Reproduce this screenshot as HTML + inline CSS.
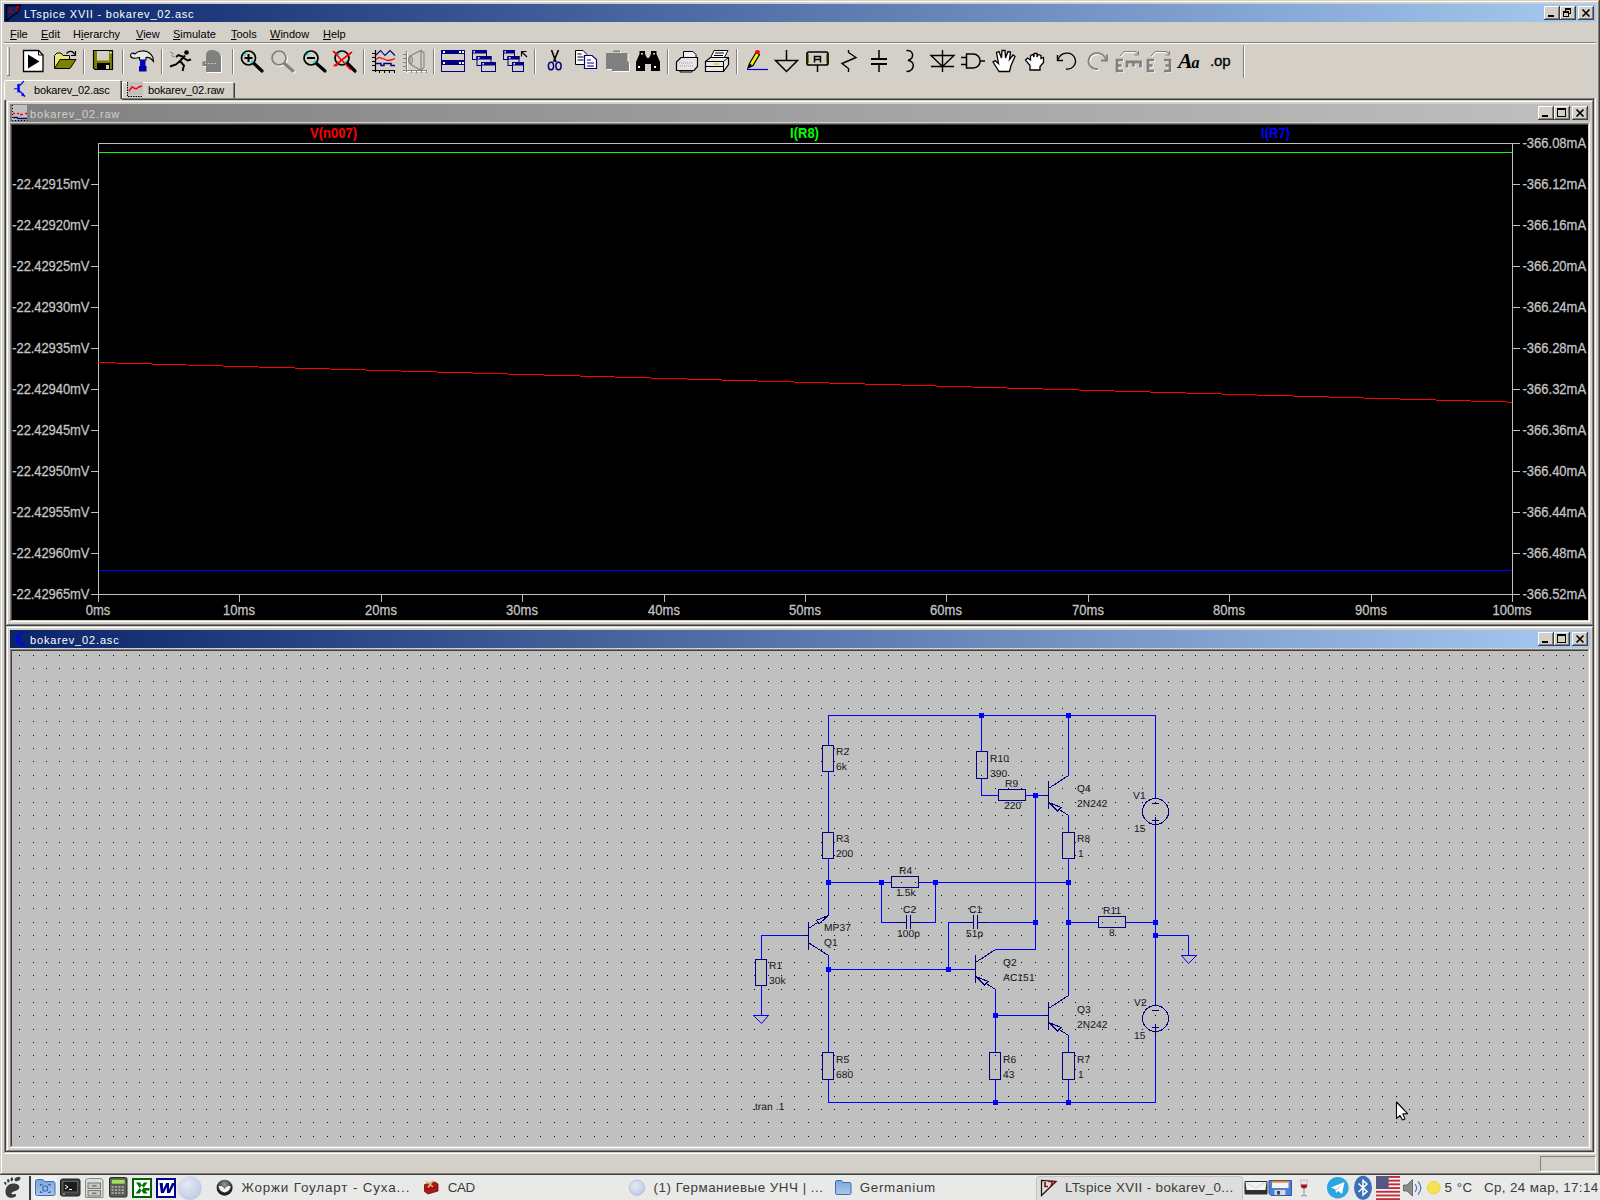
<!DOCTYPE html><html><head><meta charset="utf-8"><title>LTspice XVII</title><style>
html,body{margin:0;padding:0}
body{width:1600px;height:1200px;position:relative;overflow:hidden;background:#d4d0c8;font-family:"Liberation Sans",sans-serif;}
.a{position:absolute}
.t{position:absolute;white-space:nowrap;line-height:1}
.pt{transform:scaleY(1.07);transform-origin:0 84.65%;-webkit-text-stroke:0.25px #c4c4c4}
svg{position:absolute;left:0;top:0;overflow:visible}
</style></head><body><div class="a" style="left:0px;top:0px;width:1600px;height:1175px;background:#d4d0c8;"></div>
<div class="a" style="left:1px;top:1px;width:1597px;height:1px;background:#fff;"></div>
<div class="a" style="left:1px;top:1px;width:1px;height:1172px;background:#fff;"></div>
<div class="a" style="left:1598px;top:1px;width:1px;height:1173px;background:#808080;"></div>
<div class="a" style="left:1px;top:1173px;width:1598px;height:1px;background:#808080;"></div>
<div class="a" style="left:1599px;top:0px;width:1px;height:1175px;background:#404040;"></div>
<div class="a" style="left:0px;top:1174px;width:1600px;height:1px;background:#404040;"></div>
<div class="a" style="left:4px;top:4px;width:1592px;height:18px;background:linear-gradient(90deg,#0a246a,#a6caf0);"></div>
<svg class="a" style="left:5px;top:5px" width="17" height="17"><path d="M1.500 .5V15.500L8 10.500L12.500 7.500L15.500 .5Z" fill="none" stroke="#000" stroke-width="1.300"/><path d="M5.500 2.500v4M3 7h6" stroke="#a40000" stroke-width="1.700" fill="none"/><path d="M11 1.700h3.800M13.300 1.700l-1.500 5.300" stroke="#a40000" stroke-width="1.600" fill="none"/></svg>
<div class="t" style="left:24px;top:8.89px;font-size:11px;color:#fff;letter-spacing:0.78px">LTspice XVII - bokarev_02.asc</div>
<div class="a" style="left:1544px;top:6px;width:16px;height:14px;background:#d4d0c8;"></div>
<div class="a" style="left:1544px;top:6px;width:15px;height:1px;background:#fff;"></div>
<div class="a" style="left:1544px;top:6px;width:1px;height:13px;background:#fff;"></div>
<div class="a" style="left:1559px;top:6px;width:1px;height:14px;background:#404040;"></div>
<div class="a" style="left:1544px;top:19px;width:16px;height:1px;background:#404040;"></div>
<div class="a" style="left:1558px;top:7px;width:1px;height:12px;background:#808080;"></div>
<div class="a" style="left:1545px;top:18px;width:14px;height:1px;background:#808080;"></div>
<div class="a" style="left:1548px;top:15px;width:6px;height:2px;background:#000;"></div>
<div class="a" style="left:1560px;top:6px;width:16px;height:14px;background:#d4d0c8;"></div>
<div class="a" style="left:1560px;top:6px;width:15px;height:1px;background:#fff;"></div>
<div class="a" style="left:1560px;top:6px;width:1px;height:13px;background:#fff;"></div>
<div class="a" style="left:1575px;top:6px;width:1px;height:14px;background:#404040;"></div>
<div class="a" style="left:1560px;top:19px;width:16px;height:1px;background:#404040;"></div>
<div class="a" style="left:1574px;top:7px;width:1px;height:12px;background:#808080;"></div>
<div class="a" style="left:1561px;top:18px;width:14px;height:1px;background:#808080;"></div>
<div class="a" style="left:1565px;top:8px;width:6px;height:6px;background:#000;"></div>
<div class="a" style="left:1566px;top:10px;width:4px;height:3px;background:#d4d0c8;"></div>
<div class="a" style="left:1563px;top:11px;width:6px;height:6px;background:#000;"></div>
<div class="a" style="left:1564px;top:13px;width:4px;height:3px;background:#d4d0c8;"></div>
<div class="a" style="left:1578px;top:6px;width:16px;height:14px;background:#d4d0c8;"></div>
<div class="a" style="left:1578px;top:6px;width:15px;height:1px;background:#fff;"></div>
<div class="a" style="left:1578px;top:6px;width:1px;height:13px;background:#fff;"></div>
<div class="a" style="left:1593px;top:6px;width:1px;height:14px;background:#404040;"></div>
<div class="a" style="left:1578px;top:19px;width:16px;height:1px;background:#404040;"></div>
<div class="a" style="left:1592px;top:7px;width:1px;height:12px;background:#808080;"></div>
<div class="a" style="left:1579px;top:18px;width:14px;height:1px;background:#808080;"></div>
<svg class="a" style="left:1578px;top:6px" width="16" height="14"><path d="M4.5 3.5 L11.5 10.5 M11.5 3.5 L4.5 10.5" stroke="#000" stroke-width="1.7" fill="none"/></svg>
<div class="t" style="left:10px;top:28.69px;font-size:11px;color:#000;"><span style="text-decoration:underline">F</span>ile</div>
<div class="t" style="left:41px;top:28.69px;font-size:11px;color:#000;"><span style="text-decoration:underline">E</span>dit</div>
<div class="t" style="left:73px;top:28.69px;font-size:11px;color:#000;">H<span style="text-decoration:underline">i</span>erarchy</div>
<div class="t" style="left:136px;top:28.69px;font-size:11px;color:#000;"><span style="text-decoration:underline">V</span>iew</div>
<div class="t" style="left:173px;top:28.69px;font-size:11px;color:#000;"><span style="text-decoration:underline">S</span>imulate</div>
<div class="t" style="left:231px;top:28.69px;font-size:11px;color:#000;"><span style="text-decoration:underline">T</span>ools</div>
<div class="t" style="left:270px;top:28.69px;font-size:11px;color:#000;"><span style="text-decoration:underline">W</span>indow</div>
<div class="t" style="left:323px;top:28.69px;font-size:11px;color:#000;"><span style="text-decoration:underline">H</span>elp</div>
<div class="a" style="left:4px;top:42px;width:1592px;height:1px;background:#808080;"></div>
<div class="a" style="left:4px;top:43px;width:1592px;height:1px;background:#fff;"></div>
<div class="a" style="left:7px;top:47px;width:1px;height:28px;background:#fff;"></div>
<div class="a" style="left:8px;top:47px;width:1px;height:28px;background:#d4d0c8;"></div>
<div class="a" style="left:9px;top:47px;width:1px;height:28px;background:#808080;"></div>
<div class="a" style="left:7px;top:75px;width:3px;height:1px;background:#808080;"></div>
<div class="a" style="left:1243px;top:45px;width:1px;height:33px;background:#808080;"></div>
<div class="a" style="left:1244px;top:45px;width:1px;height:33px;background:#fff;"></div>
<div class="a" style="left:122px;top:82px;width:112px;height:16px;background:#d4d0c8;"></div>
<div class="a" style="left:122px;top:82px;width:111px;height:1px;background:#fff;"></div>
<div class="a" style="left:122px;top:82px;width:1px;height:16px;background:#fff;"></div>
<div class="a" style="left:234px;top:83px;width:1px;height:15px;background:#404040;"></div>
<div class="a" style="left:233px;top:83px;width:1px;height:15px;background:#808080;"></div>
<div class="a" style="left:4px;top:80px;width:118px;height:21px;background:#d4d0c8;"></div>
<div class="a" style="left:5px;top:80px;width:115px;height:1px;background:#fff;"></div>
<div class="a" style="left:4px;top:81px;width:1px;height:19px;background:#fff;"></div>
<div class="a" style="left:121px;top:81px;width:1px;height:18px;background:#404040;"></div>
<div class="a" style="left:120px;top:81px;width:1px;height:18px;background:#808080;"></div>
<div class="t" style="left:34px;top:84.69px;font-size:11px;color:#000;letter-spacing:-0.15px">bokarev_02.asc</div>
<div class="t" style="left:148px;top:85.39px;font-size:11px;color:#000;letter-spacing:-0.15px">bokarev_02.raw</div>
<svg class="a" style="left:12px;top:82px" width="16" height="16"><rect x="5.300" y="2" width="2.500" height="8.500" fill="#0000ff"/><path d="M2 6.800h3.500 M7.800 3.500l4.200-4.500 M7.800 9l5.200 5.500" stroke="#0000ff" stroke-width="1.100" fill="none"/><path d="M13 14.800l-4.200-1.600 2.400-2.400z" fill="#0000ff"/></svg>
<svg class="a" style="left:126px;top:82px" width="17" height="16"><rect x="2" y="0" width="15" height="13" fill="#c0c0c0"/><path d="M1.5 0v14.5h15" stroke="#000" stroke-width="1" fill="none" stroke-dasharray="1.5 1"/><path d="M3 9l3-4 4 2 3-2 3-1" stroke="#ff0000" stroke-width="1.5" fill="none"/></svg>
<div class="a" style="left:122px;top:98px;width:1474px;height:1px;background:#808080;"></div>
<div class="a" style="left:122px;top:99px;width:1473px;height:1px;background:#404040;"></div>
<div class="a" style="left:4px;top:100px;width:1px;height:1053px;background:#808080;"></div>
<div class="a" style="left:5px;top:100px;width:1px;height:1052px;background:#404040;"></div>
<div class="a" style="left:1594px;top:99px;width:1px;height:1054px;background:#d4d0c8;"></div>
<div class="a" style="left:1595px;top:98px;width:1px;height:1056px;background:#fff;"></div>
<div class="a" style="left:5px;top:1152px;width:1590px;height:1px;background:#d4d0c8;"></div>
<div class="a" style="left:4px;top:1153px;width:1592px;height:1px;background:#fff;"></div>
<div class="a" style="left:6px;top:100px;width:1588px;height:526px;background:#d4d0c8;"></div>
<div class="a" style="left:7px;top:101px;width:1585px;height:1px;background:#fff;"></div>
<div class="a" style="left:7px;top:101px;width:1px;height:523px;background:#fff;"></div>
<div class="a" style="left:1593px;top:100px;width:1px;height:526px;background:#404040;"></div>
<div class="a" style="left:6px;top:625px;width:1588px;height:1px;background:#404040;"></div>
<div class="a" style="left:1592px;top:101px;width:1px;height:524px;background:#808080;"></div>
<div class="a" style="left:7px;top:624px;width:1586px;height:1px;background:#808080;"></div>
<div class="a" style="left:10px;top:104px;width:1580px;height:18px;background:linear-gradient(90deg,#808080,#c0c0c0);"></div>
<div class="t" style="left:30px;top:108.89px;font-size:11px;color:#d4d0c8;letter-spacing:0.85px">bokarev_02.raw</div>
<svg class="a" style="left:11px;top:105px" width="16" height="16"><rect x="1" y="0" width="15" height="15" fill="#c0c0c0"/><path d="M1.5 0v15.5h15" stroke="#000" stroke-width="1" fill="none" stroke-dasharray="1 2"/><path d="M2 8.5h2m2 0h2m1 1h3m2 -1h2" stroke="#ff0000" stroke-width="1.3" fill="none"/><path d="M2 12.5h4l1 1h3l1 -0h5" stroke="#000080" stroke-width="1.3" fill="none"/></svg>
<div class="a" style="left:1538px;top:106px;width:16px;height:14px;background:#d4d0c8;"></div>
<div class="a" style="left:1538px;top:106px;width:15px;height:1px;background:#fff;"></div>
<div class="a" style="left:1538px;top:106px;width:1px;height:13px;background:#fff;"></div>
<div class="a" style="left:1553px;top:106px;width:1px;height:14px;background:#404040;"></div>
<div class="a" style="left:1538px;top:119px;width:16px;height:1px;background:#404040;"></div>
<div class="a" style="left:1552px;top:107px;width:1px;height:12px;background:#808080;"></div>
<div class="a" style="left:1539px;top:118px;width:14px;height:1px;background:#808080;"></div>
<div class="a" style="left:1542px;top:115px;width:6px;height:2px;background:#000;"></div>
<div class="a" style="left:1554px;top:106px;width:16px;height:14px;background:#d4d0c8;"></div>
<div class="a" style="left:1554px;top:106px;width:15px;height:1px;background:#fff;"></div>
<div class="a" style="left:1554px;top:106px;width:1px;height:13px;background:#fff;"></div>
<div class="a" style="left:1569px;top:106px;width:1px;height:14px;background:#404040;"></div>
<div class="a" style="left:1554px;top:119px;width:16px;height:1px;background:#404040;"></div>
<div class="a" style="left:1568px;top:107px;width:1px;height:12px;background:#808080;"></div>
<div class="a" style="left:1555px;top:118px;width:14px;height:1px;background:#808080;"></div>
<div class="a" style="left:1557px;top:108px;width:9px;height:9px;background:#000;"></div>
<div class="a" style="left:1558px;top:110px;width:7px;height:6px;background:#d4d0c8;"></div>
<div class="a" style="left:1572px;top:106px;width:16px;height:14px;background:#d4d0c8;"></div>
<div class="a" style="left:1572px;top:106px;width:15px;height:1px;background:#fff;"></div>
<div class="a" style="left:1572px;top:106px;width:1px;height:13px;background:#fff;"></div>
<div class="a" style="left:1587px;top:106px;width:1px;height:14px;background:#404040;"></div>
<div class="a" style="left:1572px;top:119px;width:16px;height:1px;background:#404040;"></div>
<div class="a" style="left:1586px;top:107px;width:1px;height:12px;background:#808080;"></div>
<div class="a" style="left:1573px;top:118px;width:14px;height:1px;background:#808080;"></div>
<svg class="a" style="left:1572px;top:106px" width="16" height="14"><path d="M4.5 3.5 L11.5 10.5 M11.5 3.5 L4.5 10.5" stroke="#000" stroke-width="1.7" fill="none"/></svg>
<div class="a" style="left:10px;top:123px;width:1579px;height:1px;background:#808080;"></div>
<div class="a" style="left:10px;top:123px;width:1px;height:498px;background:#808080;"></div>
<div class="a" style="left:11px;top:124px;width:1577px;height:1px;background:#404040;"></div>
<div class="a" style="left:11px;top:124px;width:1px;height:496px;background:#404040;"></div>
<div class="a" style="left:1589px;top:123px;width:1px;height:499px;background:#fff;"></div>
<div class="a" style="left:10px;top:621px;width:1580px;height:1px;background:#fff;"></div>
<div class="a" style="left:1588px;top:124px;width:1px;height:497px;background:#d4d0c8;"></div>
<div class="a" style="left:11px;top:620px;width:1578px;height:1px;background:#d4d0c8;"></div>
<div class="a" style="left:6px;top:626px;width:1588px;height:526px;background:#d4d0c8;"></div>
<div class="a" style="left:7px;top:627px;width:1585px;height:1px;background:#fff;"></div>
<div class="a" style="left:7px;top:627px;width:1px;height:523px;background:#fff;"></div>
<div class="a" style="left:1593px;top:626px;width:1px;height:526px;background:#404040;"></div>
<div class="a" style="left:6px;top:1151px;width:1588px;height:1px;background:#404040;"></div>
<div class="a" style="left:1592px;top:627px;width:1px;height:524px;background:#808080;"></div>
<div class="a" style="left:7px;top:1150px;width:1586px;height:1px;background:#808080;"></div>
<div class="a" style="left:10px;top:630px;width:1580px;height:18px;background:linear-gradient(90deg,#0a246a,#a6caf0);"></div>
<div class="t" style="left:30px;top:634.89px;font-size:11px;color:#fff;letter-spacing:0.85px">bokarev_02.asc</div>
<svg class="a" style="left:11px;top:631px" width="16" height="17"><rect x="6" y="3.5" width="2.2" height="9" fill="#0000ff"/><path d="M3 7.5h3.500 M8 4.500l5-4.500 M8 11l6 4.500" stroke="#0000ff" stroke-width="1.1" fill="none"/><path d="M14 15.800l-4.500-1.800 2.500-2.500z" fill="#0000ff"/></svg>
<div class="a" style="left:1538px;top:632px;width:16px;height:14px;background:#d4d0c8;"></div>
<div class="a" style="left:1538px;top:632px;width:15px;height:1px;background:#fff;"></div>
<div class="a" style="left:1538px;top:632px;width:1px;height:13px;background:#fff;"></div>
<div class="a" style="left:1553px;top:632px;width:1px;height:14px;background:#404040;"></div>
<div class="a" style="left:1538px;top:645px;width:16px;height:1px;background:#404040;"></div>
<div class="a" style="left:1552px;top:633px;width:1px;height:12px;background:#808080;"></div>
<div class="a" style="left:1539px;top:644px;width:14px;height:1px;background:#808080;"></div>
<div class="a" style="left:1542px;top:641px;width:6px;height:2px;background:#000;"></div>
<div class="a" style="left:1554px;top:632px;width:16px;height:14px;background:#d4d0c8;"></div>
<div class="a" style="left:1554px;top:632px;width:15px;height:1px;background:#fff;"></div>
<div class="a" style="left:1554px;top:632px;width:1px;height:13px;background:#fff;"></div>
<div class="a" style="left:1569px;top:632px;width:1px;height:14px;background:#404040;"></div>
<div class="a" style="left:1554px;top:645px;width:16px;height:1px;background:#404040;"></div>
<div class="a" style="left:1568px;top:633px;width:1px;height:12px;background:#808080;"></div>
<div class="a" style="left:1555px;top:644px;width:14px;height:1px;background:#808080;"></div>
<div class="a" style="left:1557px;top:634px;width:9px;height:9px;background:#000;"></div>
<div class="a" style="left:1558px;top:636px;width:7px;height:6px;background:#d4d0c8;"></div>
<div class="a" style="left:1572px;top:632px;width:16px;height:14px;background:#d4d0c8;"></div>
<div class="a" style="left:1572px;top:632px;width:15px;height:1px;background:#fff;"></div>
<div class="a" style="left:1572px;top:632px;width:1px;height:13px;background:#fff;"></div>
<div class="a" style="left:1587px;top:632px;width:1px;height:14px;background:#404040;"></div>
<div class="a" style="left:1572px;top:645px;width:16px;height:1px;background:#404040;"></div>
<div class="a" style="left:1586px;top:633px;width:1px;height:12px;background:#808080;"></div>
<div class="a" style="left:1573px;top:644px;width:14px;height:1px;background:#808080;"></div>
<svg class="a" style="left:1572px;top:632px" width="16" height="14"><path d="M4.5 3.5 L11.5 10.5 M11.5 3.5 L4.5 10.5" stroke="#000" stroke-width="1.7" fill="none"/></svg>
<div class="a" style="left:10px;top:649px;width:1579px;height:1px;background:#808080;"></div>
<div class="a" style="left:10px;top:649px;width:1px;height:498px;background:#808080;"></div>
<div class="a" style="left:11px;top:650px;width:1577px;height:1px;background:#404040;"></div>
<div class="a" style="left:11px;top:650px;width:1px;height:496px;background:#404040;"></div>
<div class="a" style="left:1589px;top:649px;width:1px;height:499px;background:#fff;"></div>
<div class="a" style="left:10px;top:1147px;width:1580px;height:1px;background:#fff;"></div>
<div class="a" style="left:1588px;top:650px;width:1px;height:497px;background:#d4d0c8;"></div>
<div class="a" style="left:11px;top:1146px;width:1578px;height:1px;background:#d4d0c8;"></div>
<div class="a" style="left:12px;top:125px;width:1576px;height:495px;background:#000;"></div>
<svg width="1600" height="1200" shape-rendering="crispEdges"><path d="M98.5 143.5H1512.5V594.5H98.5Z" stroke="#c0c0c0" fill="none" stroke-width="1"/><path d="M1513 143.5H1520M91 184.5H98M1513 184.5H1520M91 225.5H98M1513 225.5H1520M91 266.5H98M1513 266.5H1520M91 307.5H98M1513 307.5H1520M91 348.5H98M1513 348.5H1520M91 389.5H98M1513 389.5H1520M91 430.5H98M1513 430.5H1520M91 471.5H98M1513 471.5H1520M91 512.5H98M1513 512.5H1520M91 553.5H98M1513 553.5H1520M91 594.5H98M1513 594.5H1520M98.5 595V602M239.5 595V602M381.5 595V602M522.5 595V602M664.5 595V602M805.5 595V602M946.5 595V602M1088.5 595V602M1229.5 595V602M1371.5 595V602M1512.5 595V602" stroke="#c0c0c0" fill="none" stroke-width="1"/><path d="M99 152.5H1512" stroke="#00ff00" stroke-width="1"/><path d="M99 570.5H1512" stroke="#0000ff" stroke-width="1"/><path d="M98 362.5L1512 402.15" stroke="#ff0000" stroke-width="1" fill="none"/></svg>
<div class="t pt" style="right:1510.7px;top:178.00px;font-size:13px;color:#c4c4c4;letter-spacing:-0.1px">-22.42915mV</div>
<div class="t pt" style="right:1510.7px;top:219.00px;font-size:13px;color:#c4c4c4;letter-spacing:-0.1px">-22.42920mV</div>
<div class="t pt" style="right:1510.7px;top:260.00px;font-size:13px;color:#c4c4c4;letter-spacing:-0.1px">-22.42925mV</div>
<div class="t pt" style="right:1510.7px;top:301.00px;font-size:13px;color:#c4c4c4;letter-spacing:-0.1px">-22.42930mV</div>
<div class="t pt" style="right:1510.7px;top:342.00px;font-size:13px;color:#c4c4c4;letter-spacing:-0.1px">-22.42935mV</div>
<div class="t pt" style="right:1510.7px;top:383.00px;font-size:13px;color:#c4c4c4;letter-spacing:-0.1px">-22.42940mV</div>
<div class="t pt" style="right:1510.7px;top:424.00px;font-size:13px;color:#c4c4c4;letter-spacing:-0.1px">-22.42945mV</div>
<div class="t pt" style="right:1510.7px;top:465.00px;font-size:13px;color:#c4c4c4;letter-spacing:-0.1px">-22.42950mV</div>
<div class="t pt" style="right:1510.7px;top:506.00px;font-size:13px;color:#c4c4c4;letter-spacing:-0.1px">-22.42955mV</div>
<div class="t pt" style="right:1510.7px;top:547.00px;font-size:13px;color:#c4c4c4;letter-spacing:-0.1px">-22.42960mV</div>
<div class="t pt" style="right:1510.7px;top:588.00px;font-size:13px;color:#c4c4c4;letter-spacing:-0.1px">-22.42965mV</div>
<div class="t" style="left:1522.5px;top:137.00px;font-size:13px;color:#c4c4c4;transform:scaleY(1.07);transform-origin:0 84.65%;-webkit-text-stroke:0.25px #c4c4c4">-366.08mA</div>
<div class="t" style="left:1522.5px;top:178.00px;font-size:13px;color:#c4c4c4;transform:scaleY(1.07);transform-origin:0 84.65%;-webkit-text-stroke:0.25px #c4c4c4">-366.12mA</div>
<div class="t" style="left:1522.5px;top:219.00px;font-size:13px;color:#c4c4c4;transform:scaleY(1.07);transform-origin:0 84.65%;-webkit-text-stroke:0.25px #c4c4c4">-366.16mA</div>
<div class="t" style="left:1522.5px;top:260.00px;font-size:13px;color:#c4c4c4;transform:scaleY(1.07);transform-origin:0 84.65%;-webkit-text-stroke:0.25px #c4c4c4">-366.20mA</div>
<div class="t" style="left:1522.5px;top:301.00px;font-size:13px;color:#c4c4c4;transform:scaleY(1.07);transform-origin:0 84.65%;-webkit-text-stroke:0.25px #c4c4c4">-366.24mA</div>
<div class="t" style="left:1522.5px;top:342.00px;font-size:13px;color:#c4c4c4;transform:scaleY(1.07);transform-origin:0 84.65%;-webkit-text-stroke:0.25px #c4c4c4">-366.28mA</div>
<div class="t" style="left:1522.5px;top:383.00px;font-size:13px;color:#c4c4c4;transform:scaleY(1.07);transform-origin:0 84.65%;-webkit-text-stroke:0.25px #c4c4c4">-366.32mA</div>
<div class="t" style="left:1522.5px;top:424.00px;font-size:13px;color:#c4c4c4;transform:scaleY(1.07);transform-origin:0 84.65%;-webkit-text-stroke:0.25px #c4c4c4">-366.36mA</div>
<div class="t" style="left:1522.5px;top:465.00px;font-size:13px;color:#c4c4c4;transform:scaleY(1.07);transform-origin:0 84.65%;-webkit-text-stroke:0.25px #c4c4c4">-366.40mA</div>
<div class="t" style="left:1522.5px;top:506.00px;font-size:13px;color:#c4c4c4;transform:scaleY(1.07);transform-origin:0 84.65%;-webkit-text-stroke:0.25px #c4c4c4">-366.44mA</div>
<div class="t" style="left:1522.5px;top:547.00px;font-size:13px;color:#c4c4c4;transform:scaleY(1.07);transform-origin:0 84.65%;-webkit-text-stroke:0.25px #c4c4c4">-366.48mA</div>
<div class="t" style="left:1522.5px;top:588.00px;font-size:13px;color:#c4c4c4;transform:scaleY(1.07);transform-origin:0 84.65%;-webkit-text-stroke:0.25px #c4c4c4">-366.52mA</div>
<div class="t pt" style="left:58px;width:80px;text-align:center;top:604.00px;font-size:13px;color:#c4c4c4">0ms</div>
<div class="t pt" style="left:199px;width:80px;text-align:center;top:604.00px;font-size:13px;color:#c4c4c4">10ms</div>
<div class="t pt" style="left:341px;width:80px;text-align:center;top:604.00px;font-size:13px;color:#c4c4c4">20ms</div>
<div class="t pt" style="left:482px;width:80px;text-align:center;top:604.00px;font-size:13px;color:#c4c4c4">30ms</div>
<div class="t pt" style="left:624px;width:80px;text-align:center;top:604.00px;font-size:13px;color:#c4c4c4">40ms</div>
<div class="t pt" style="left:765px;width:80px;text-align:center;top:604.00px;font-size:13px;color:#c4c4c4">50ms</div>
<div class="t pt" style="left:906px;width:80px;text-align:center;top:604.00px;font-size:13px;color:#c4c4c4">60ms</div>
<div class="t pt" style="left:1048px;width:80px;text-align:center;top:604.00px;font-size:13px;color:#c4c4c4">70ms</div>
<div class="t pt" style="left:1189px;width:80px;text-align:center;top:604.00px;font-size:13px;color:#c4c4c4">80ms</div>
<div class="t pt" style="left:1331px;width:80px;text-align:center;top:604.00px;font-size:13px;color:#c4c4c4">90ms</div>
<div class="t pt" style="left:1472px;width:80px;text-align:center;top:604.00px;font-size:13px;color:#c4c4c4">100ms</div>
<div class="t" style="left:283.5px;width:100px;text-align:center;top:126.60px;font-size:13px;font-weight:bold;transform:scaleY(1.08);transform-origin:0 84.65%;color:#ff0000">V(n007)</div>
<div class="t" style="left:754.5px;width:100px;text-align:center;top:126.60px;font-size:13px;font-weight:bold;transform:scaleY(1.08);transform-origin:0 84.65%;color:#00ff00">I(R8)</div>
<div class="t" style="left:1225.5px;width:100px;text-align:center;top:126.60px;font-size:13px;font-weight:bold;transform:scaleY(1.08);transform-origin:0 84.65%;color:#0000ff">I(R7)</div>
<div class="a" style="left:12px;top:651px;width:1576px;height:495px;background:#c0c0c0;"></div>
<svg width="1600" height="1200" shape-rendering="crispEdges"><defs><clipPath id="cv"><rect x="12" y="651" width="1576" height="495"/></clipPath><path id="dr" d="M19 .5h1M33 .5h1M46 .5h1M59 .5h1M73 .5h1M86 .5h1M99 .5h1M113 .5h1M126 .5h1M139 .5h1M153 .5h1M166 .5h1M180 .5h1M193 .5h1M206 .5h1M220 .5h1M233 .5h1M246 .5h1M260 .5h1M273 .5h1M286 .5h1M300 .5h1M313 .5h1M327 .5h1M340 .5h1M353 .5h1M367 .5h1M380 .5h1M393 .5h1M407 .5h1M420 .5h1M433 .5h1M447 .5h1M460 .5h1M474 .5h1M487 .5h1M500 .5h1M514 .5h1M527 .5h1M540 .5h1M554 .5h1M567 .5h1M580 .5h1M594 .5h1M607 .5h1M621 .5h1M634 .5h1M647 .5h1M661 .5h1M674 .5h1M687 .5h1M701 .5h1M714 .5h1M727 .5h1M741 .5h1M754 .5h1M768 .5h1M781 .5h1M794 .5h1M808 .5h1M821 .5h1M834 .5h1M848 .5h1M861 .5h1M874 .5h1M888 .5h1M901 .5h1M915 .5h1M928 .5h1M941 .5h1M955 .5h1M968 .5h1M981 .5h1M995 .5h1M1008 .5h1M1021 .5h1M1035 .5h1M1048 .5h1M1062 .5h1M1075 .5h1M1088 .5h1M1102 .5h1M1115 .5h1M1128 .5h1M1142 .5h1M1155 .5h1M1168 .5h1M1182 .5h1M1195 .5h1M1209 .5h1M1222 .5h1M1235 .5h1M1249 .5h1M1262 .5h1M1275 .5h1M1289 .5h1M1302 .5h1M1315 .5h1M1329 .5h1M1342 .5h1M1356 .5h1M1369 .5h1M1382 .5h1M1396 .5h1M1409 .5h1M1422 .5h1M1436 .5h1M1449 .5h1M1462 .5h1M1476 .5h1M1489 .5h1M1503 .5h1M1516 .5h1M1529 .5h1M1543 .5h1M1556 .5h1M1569 .5h1M1583 .5h1" stroke="#000" stroke-width="1"/></defs><g clip-path="url(#cv)"><use href="#dr" y="655"/><use href="#dr" y="668"/><use href="#dr" y="681"/><use href="#dr" y="695"/><use href="#dr" y="708"/><use href="#dr" y="721"/><use href="#dr" y="735"/><use href="#dr" y="748"/><use href="#dr" y="761"/><use href="#dr" y="775"/><use href="#dr" y="788"/><use href="#dr" y="802"/><use href="#dr" y="815"/><use href="#dr" y="828"/><use href="#dr" y="842"/><use href="#dr" y="855"/><use href="#dr" y="868"/><use href="#dr" y="882"/><use href="#dr" y="895"/><use href="#dr" y="908"/><use href="#dr" y="922"/><use href="#dr" y="935"/><use href="#dr" y="949"/><use href="#dr" y="962"/><use href="#dr" y="975"/><use href="#dr" y="989"/><use href="#dr" y="1002"/><use href="#dr" y="1015"/><use href="#dr" y="1029"/><use href="#dr" y="1042"/><use href="#dr" y="1055"/><use href="#dr" y="1069"/><use href="#dr" y="1082"/><use href="#dr" y="1096"/><use href="#dr" y="1109"/><use href="#dr" y="1122"/><use href="#dr" y="1136"/></g><path d="M828 715.5H1156M828.5 715V746M828.5 771V833M828.5 858V916M828.5 955V1053M828.5 1079V1103M828 1102.5H1156M1155.5 715V797M1155.5 828V1004M1155.5 1035V1103M981.5 715V752M981.5 778V796M981 795.5H999M1026 795.5H1044M1035.5 795V950M995 949.5H1036M1068.5 715V776M1068.5 815V833M1068.5 858V996M828 882.5H892M919 882.5H1069M881.5 882V923M881 922.5H896M922 922.5H936M935.5 882V923M988 922.5H1036M948 922.5H963M948.5 922V970M828 969.5H971M995.5 989V1053M995.5 1079V1103M995 1015.5H1044M1068.5 1035V1053M1068.5 1079V1103M1068 922.5H1099M1126 922.5H1156M1155 935.5H1189M1188.5 935V956M761 935.5H804M761.5 935V960M761.5 985V1016" stroke="#0000ff" stroke-width="1" fill="none"/><path d="M1181 955.5H1197 M1181.5 955.5L1188.5 963.5L1196.5 955.5 M753 1015.5H769 M753.5 1015.5L761.5 1023.5L768.5 1015.5" stroke="#0000ff" stroke-width="1" fill="none" shape-rendering="auto"/><rect x="979" y="713" width="5" height="5" fill="#0000ff"/><rect x="1066" y="713" width="5" height="5" fill="#0000ff"/><rect x="1033" y="793" width="5" height="5" fill="#0000ff"/><rect x="826" y="880" width="5" height="5" fill="#0000ff"/><rect x="879" y="880" width="5" height="5" fill="#0000ff"/><rect x="933" y="880" width="5" height="5" fill="#0000ff"/><rect x="1066" y="880" width="5" height="5" fill="#0000ff"/><rect x="1033" y="920" width="5" height="5" fill="#0000ff"/><rect x="1066" y="920" width="5" height="5" fill="#0000ff"/><rect x="1153" y="920" width="5" height="5" fill="#0000ff"/><rect x="1153" y="933" width="5" height="5" fill="#0000ff"/><rect x="826" y="967" width="5" height="5" fill="#0000ff"/><rect x="946" y="967" width="5" height="5" fill="#0000ff"/><rect x="993" y="1013" width="5" height="5" fill="#0000ff"/><rect x="993" y="1100" width="5" height="5" fill="#0000ff"/><rect x="1066" y="1100" width="5" height="5" fill="#0000ff"/><rect x="822.5" y="745.5" width="11" height="26" fill="none" stroke="#000080" stroke-width="1"/><rect x="822.5" y="832.5" width="11" height="26" fill="none" stroke="#000080" stroke-width="1"/><rect x="976.5" y="751.5" width="11" height="27" fill="none" stroke="#000080" stroke-width="1"/><rect x="998.5" y="789.5" width="27" height="11" fill="none" stroke="#000080" stroke-width="1"/><rect x="1062.5" y="832.5" width="12" height="26" fill="none" stroke="#000080" stroke-width="1"/><rect x="891.5" y="876.5" width="27" height="11" fill="none" stroke="#000080" stroke-width="1"/><rect x="755.5" y="959.5" width="11" height="26" fill="none" stroke="#000080" stroke-width="1"/><rect x="1098.5" y="916.5" width="27" height="11" fill="none" stroke="#000080" stroke-width="1"/><rect x="822.5" y="1052.5" width="11" height="27" fill="none" stroke="#000080" stroke-width="1"/><rect x="989.5" y="1052.5" width="11" height="27" fill="none" stroke="#000080" stroke-width="1"/><rect x="1062.5" y="1052.5" width="12" height="27" fill="none" stroke="#000080" stroke-width="1"/><path d="M895 922.5H906M906.5 915V929M910.5 915V929M911 922.5H922M962 922.5H973M973.5 915V929M977.5 915V929M978 922.5H988M1043 795.5H1049M1048.5 781V809M1043 1015.5H1049M1048.5 1002V1030M970 969.5H976M975.5 955V983M803 935.5H809M808.5 922V950M1155.5 796V799M1155.5 817V829M1152 803.5H1159M1152 820.5H1159M1155.5 1003V1006M1155.5 1024V1036M1152 1010.5H1159M1152 1027.5H1159" stroke="#000080" stroke-width="1" fill="none"/><path d="M1048.5 788.5L1068.5 775.5M1059 809.3L1068.5 815.5M1049 802.5L1061 807.5L1057.5 811ZM1048.5 1008.5L1068.5 995.5M1059 1029.3L1068.5 1035.5M1049 1022.5L1061 1027.5L1057.5 1031ZM975.5 962.5L995.5 949.5M986 983.3L995.5 989.5M976 976.5L988 981.5L984.5 985ZM808.5 928.5L818 922.2M808.5 942.8L828.5 955.5M828 915.6L816.25 920.4L819.4 923.75Z" stroke="#000080" stroke-width="1" fill="none" shape-rendering="crispEdges"/><circle cx="1155.5" cy="811.5" r="13" stroke="#000080" stroke-width="1" fill="none" shape-rendering="crispEdges"/><circle cx="1155.5" cy="1018.5" r="13" stroke="#000080" stroke-width="1" fill="none" shape-rendering="crispEdges"/></svg>
<div class="t" style="left:836px;top:748.37px;font-size:10.2px;color:#14141c;text-rendering:geometricPrecision;letter-spacing:0.1px">R2</div>
<div class="t" style="left:836px;top:763.37px;font-size:10.2px;color:#14141c;text-rendering:geometricPrecision;letter-spacing:0.1px">6k</div>
<div class="t" style="left:836px;top:835.37px;font-size:10.2px;color:#14141c;text-rendering:geometricPrecision;letter-spacing:0.1px">R3</div>
<div class="t" style="left:836px;top:850.37px;font-size:10.2px;color:#14141c;text-rendering:geometricPrecision;letter-spacing:0.1px">200</div>
<div class="t" style="left:990px;top:755.37px;font-size:10.2px;color:#14141c;text-rendering:geometricPrecision;letter-spacing:0.1px">R10</div>
<div class="t" style="left:990px;top:770.37px;font-size:10.2px;color:#14141c;text-rendering:geometricPrecision;letter-spacing:0.1px">390</div>
<div class="t" style="left:1005px;top:780.37px;font-size:10.2px;color:#14141c;text-rendering:geometricPrecision;letter-spacing:0.1px">R9</div>
<div class="t" style="left:1004px;top:802.37px;font-size:10.2px;color:#14141c;text-rendering:geometricPrecision;letter-spacing:0.1px">220</div>
<div class="t" style="left:1077px;top:785.37px;font-size:10.2px;color:#14141c;text-rendering:geometricPrecision;letter-spacing:0.1px">Q4</div>
<div class="t" style="left:1077px;top:800.37px;font-size:10.2px;color:#14141c;text-rendering:geometricPrecision;letter-spacing:0.1px">2N242</div>
<div class="t" style="left:1133px;top:792.37px;font-size:10.2px;color:#14141c;text-rendering:geometricPrecision;letter-spacing:0.1px">V1</div>
<div class="t" style="left:1134px;top:825.37px;font-size:10.2px;color:#14141c;text-rendering:geometricPrecision;letter-spacing:0.1px">15</div>
<div class="t" style="left:1077px;top:835.37px;font-size:10.2px;color:#14141c;text-rendering:geometricPrecision;letter-spacing:0.1px">R8</div>
<div class="t" style="left:1078px;top:850.37px;font-size:10.2px;color:#14141c;text-rendering:geometricPrecision;letter-spacing:0.1px">1</div>
<div class="t" style="left:899px;top:867.37px;font-size:10.2px;color:#14141c;text-rendering:geometricPrecision;letter-spacing:0.1px">R4</div>
<div class="t" style="left:896px;top:889.37px;font-size:10.2px;color:#14141c;text-rendering:geometricPrecision;letter-spacing:0.1px">1.5k</div>
<div class="t" style="left:903px;top:906.37px;font-size:10.2px;color:#14141c;text-rendering:geometricPrecision;letter-spacing:0.1px">C2</div>
<div class="t" style="left:897px;top:930.37px;font-size:10.2px;color:#14141c;text-rendering:geometricPrecision;letter-spacing:0.1px">100p</div>
<div class="t" style="left:969px;top:906.37px;font-size:10.2px;color:#14141c;text-rendering:geometricPrecision;letter-spacing:0.1px">C1</div>
<div class="t" style="left:966px;top:930.37px;font-size:10.2px;color:#14141c;text-rendering:geometricPrecision;letter-spacing:0.1px">51p</div>
<div class="t" style="left:824px;top:924.37px;font-size:10.2px;color:#14141c;text-rendering:geometricPrecision;letter-spacing:0.1px">MP37</div>
<div class="t" style="left:824px;top:939.37px;font-size:10.2px;color:#14141c;text-rendering:geometricPrecision;letter-spacing:0.1px">Q1</div>
<div class="t" style="left:769px;top:962.37px;font-size:10.2px;color:#14141c;text-rendering:geometricPrecision;letter-spacing:0.1px">R1</div>
<div class="t" style="left:769px;top:977.37px;font-size:10.2px;color:#14141c;text-rendering:geometricPrecision;letter-spacing:0.1px">30k</div>
<div class="t" style="left:1003px;top:959.37px;font-size:10.2px;color:#14141c;text-rendering:geometricPrecision;letter-spacing:0.1px">Q2</div>
<div class="t" style="left:1003px;top:974.37px;font-size:10.2px;color:#14141c;text-rendering:geometricPrecision;letter-spacing:0.1px">AC151</div>
<div class="t" style="left:1103px;top:907.37px;font-size:10.2px;color:#14141c;text-rendering:geometricPrecision;letter-spacing:0.1px">R11</div>
<div class="t" style="left:1109px;top:929.37px;font-size:10.2px;color:#14141c;text-rendering:geometricPrecision;letter-spacing:0.1px">8</div>
<div class="t" style="left:1077px;top:1006.37px;font-size:10.2px;color:#14141c;text-rendering:geometricPrecision;letter-spacing:0.1px">Q3</div>
<div class="t" style="left:1077px;top:1021.37px;font-size:10.2px;color:#14141c;text-rendering:geometricPrecision;letter-spacing:0.1px">2N242</div>
<div class="t" style="left:1134px;top:999.37px;font-size:10.2px;color:#14141c;text-rendering:geometricPrecision;letter-spacing:0.1px">V2</div>
<div class="t" style="left:1134px;top:1032.37px;font-size:10.2px;color:#14141c;text-rendering:geometricPrecision;letter-spacing:0.1px">15</div>
<div class="t" style="left:836px;top:1056.37px;font-size:10.2px;color:#14141c;text-rendering:geometricPrecision;letter-spacing:0.1px">R5</div>
<div class="t" style="left:836px;top:1071.37px;font-size:10.2px;color:#14141c;text-rendering:geometricPrecision;letter-spacing:0.1px">680</div>
<div class="t" style="left:1003px;top:1056.37px;font-size:10.2px;color:#14141c;text-rendering:geometricPrecision;letter-spacing:0.1px">R6</div>
<div class="t" style="left:1003px;top:1071.37px;font-size:10.2px;color:#14141c;text-rendering:geometricPrecision;letter-spacing:0.1px">43</div>
<div class="t" style="left:1077px;top:1056.37px;font-size:10.2px;color:#14141c;text-rendering:geometricPrecision;letter-spacing:0.1px">R7</div>
<div class="t" style="left:1078px;top:1071.37px;font-size:10.2px;color:#14141c;text-rendering:geometricPrecision;letter-spacing:0.1px">1</div>
<div class="t" style="left:752px;top:1103.37px;font-size:10.2px;color:#14141c;text-rendering:geometricPrecision;letter-spacing:0.1px">.tran .1</div>
<svg width="1600" height="100"><path d="M83.5 49V74" stroke="#808080" shape-rendering="crispEdges"/><path d="M84.5 49V74" stroke="#fff" shape-rendering="crispEdges"/><path d="M122.5 49V74" stroke="#808080" shape-rendering="crispEdges"/><path d="M123.5 49V74" stroke="#fff" shape-rendering="crispEdges"/><path d="M161.5 49V74" stroke="#808080" shape-rendering="crispEdges"/><path d="M162.5 49V74" stroke="#fff" shape-rendering="crispEdges"/><path d="M232.5 49V74" stroke="#808080" shape-rendering="crispEdges"/><path d="M233.5 49V74" stroke="#fff" shape-rendering="crispEdges"/><path d="M363.5 49V74" stroke="#808080" shape-rendering="crispEdges"/><path d="M364.5 49V74" stroke="#fff" shape-rendering="crispEdges"/><path d="M433.5 49V74" stroke="#808080" shape-rendering="crispEdges"/><path d="M434.5 49V74" stroke="#fff" shape-rendering="crispEdges"/><path d="M534.5 49V74" stroke="#808080" shape-rendering="crispEdges"/><path d="M535.5 49V74" stroke="#fff" shape-rendering="crispEdges"/><path d="M667.5 49V74" stroke="#808080" shape-rendering="crispEdges"/><path d="M668.5 49V74" stroke="#fff" shape-rendering="crispEdges"/><path d="M736.5 49V74" stroke="#808080" shape-rendering="crispEdges"/><path d="M737.5 49V74" stroke="#fff" shape-rendering="crispEdges"/><path d="M23.5 50.5H38.5L43 55V71.5H23.5Z" fill="#fff" stroke="#000" stroke-width="1.3"/><path d="M38.5 50.5V55H43" fill="none" stroke="#000" stroke-width="1"/><path d="M28 54.5L39.5 61.5L28 68.5Z" fill="#000"/><path d="M54.5 68V55.5L57 53H61L63 55.5H69.5V59" fill="#e8e878" stroke="#000" stroke-width="1"/><path d="M54.5 68.5L60 59.5H76L70 68.5Z" fill="#808000" stroke="#000" stroke-width="1"/><path d="M66.5 53.5C69 50.5 73 50.5 74.5 54.5M75.5 51v4.500h-4.500" fill="none" stroke="#000" stroke-width="1.2"/><path d="M93.500 50.500H112.500V69.500H95L93.500 68Z" fill="#808000" stroke="#000" stroke-width="1.2"/><rect x="97" y="51" width="12" height="9.500" fill="#d4d0c8"/><rect x="97" y="63" width="13" height="6" fill="#000"/><rect x="106" y="65" width="3" height="4" fill="#d4d0c8"/><rect x="110" y="52" width="1.500" height="1.500" fill="#fff"/><path d="M130.500 56C130.500 53 133 52.500 135 54C138 50.500 146 49.500 150 53.500C153 56 153.500 59 153.500 61.500C151 58 148 57 146 57.500V60H139.500V57.500C136 58.500 132 59.500 130.500 56Z" fill="#e8e8e8" stroke="#000" stroke-width="1.100"/><rect x="140" y="60" width="5.500" height="6" fill="#0000c8"/><rect x="139" y="66" width="7.500" height="5.500" fill="#0000a0"/><circle cx="186.500" cy="52.500" r="2.300" fill="#000"/><path d="M185 55.500L180 61L176 64.500L170 66.500M180 61L184 65.500L182.500 71M183 57.500L187.500 60.500L191 59.500M183.500 57L178.500 55L176 57" fill="none" stroke="#000" stroke-width="1.900"/><path d="M170 52l4 2M171 55.500l3.500 1.500" stroke="#808080" stroke-width="1" fill="none"/><path d="M206 56C206 52 208 50 211.500 50C216 50 220.500 52 221 57V72H206V66H202.500V61.500H206Z" fill="#fff" transform="translate(1,1)"/><path d="M206 56C206 52 208 50 211.500 50C216 50 220.500 52 221 57V72H206V66H202.500V61.500H206Z" fill="#808080"/><path d="M205 63.500h12" stroke="#d4d0c8" stroke-dasharray="1.500 1.500"/><path d="M254.0 63.5L262 71" stroke="#000" stroke-width="3.200" stroke-linecap="round"/><circle cx="248.5" cy="58" r="7" fill="#d4d0c8" stroke="#000" stroke-width="1.700"/><path d="M243.5 55.5L246.5 52.5M251.0 63L253.5 60.5" stroke="#00e0e0" stroke-width="1.600"/><path d="M244.500 58H252.500M248.500 54V62" stroke="#000" stroke-width="2"/><g transform="translate(1,1)"><path d="M284.5 63.5L293 71" stroke="#fff" stroke-width="3.200" stroke-linecap="round"/><circle cx="279" cy="58" r="7" fill="#d4d0c8" stroke="#fff" stroke-width="1.700"/></g><path d="M284.5 63.5L293 71" stroke="#808080" stroke-width="3.200" stroke-linecap="round"/><circle cx="279" cy="58" r="7" fill="#d4d0c8" stroke="#808080" stroke-width="1.700"/><path d="M316.5 63.5L325 71" stroke="#000" stroke-width="3.200" stroke-linecap="round"/><circle cx="311" cy="58" r="7" fill="#d4d0c8" stroke="#000" stroke-width="1.700"/><path d="M306 55.5L309 52.5M313.5 63L316 60.5" stroke="#00e0e0" stroke-width="1.600"/><path d="M307 58H315" stroke="#000" stroke-width="2"/><path d="M347.5 63.5L355 71" stroke="#000" stroke-width="3.200" stroke-linecap="round"/><circle cx="342" cy="58" r="7" fill="#d4d0c8" stroke="#000" stroke-width="1.700"/><path d="M337 55.5L340 52.5M344.5 63L347 60.5" stroke="#00e0e0" stroke-width="1.600"/><path d="M333 51L351 70M352 52L334 66M334 51.500l3 3M333.500 65.500h4" stroke="#ff0000" stroke-width="1.600"/><path d="M375.500 50V72M372 70.500H395" stroke="#000" stroke-width="1.200" fill="none"/><path d="M372 53.500h3M372 57.500h3M372 61.500h3M372 65.500h3M379.500 70v3M384.500 70v3M389.500 70v3M394.500 70v3" stroke="#000" stroke-width="1"/><path d="M376 55L380.500 50.500L385 55.500L390 50.500L395 55.500" stroke="#000080" fill="none" stroke-width="1.100"/><path d="M376 59.500L379 57.500L384 59L388 60.500L391 60L395 58.500" stroke="#ff0000" fill="none" stroke-width="1.300"/><path d="M376 63.500H381V65.500H384V63.500H391V65.500H395" stroke="#000080" fill="none" stroke-width="1.400"/><g transform="translate(1,1)" stroke="#fff" fill="none"><path d="M406.500 51V72M403 70.500H427"/></g><path d="M406.500 51V72M403 70.500H427" stroke="#808080" fill="none" stroke-width="1.100"/><path d="M403 54.500h3M403 58.500h3M403 62.500h3M403 66.500h3M411.500 70v3M416.500 70v3M421.500 70v3M426.500 70v3" stroke="#808080"/><path d="M410 56L421 50.500V70.500L410 64Z M421 50.500L424 53V67L421 70.500" stroke="#808080" fill="none" stroke-width="1.100"/><ellipse cx="410.500" cy="60" rx="2" ry="4" stroke="#808080" fill="none"/><rect x="441.500" y="50.500" width="23" height="10" fill="#d4d0c8" stroke="#000080"/><rect x="441" y="50" width="24" height="4" fill="#000080"/><rect x="441.500" y="61.500" width="23" height="10" fill="#d4d0c8" stroke="#000080"/><rect x="441" y="61" width="24" height="4" fill="#000080"/><rect x="443" y="51" width="2" height="2" fill="#fff"/><rect x="459" y="51" width="2" height="2" fill="#fff"/><rect x="462" y="51" width="2" height="2" fill="#fff"/><rect x="443" y="62" width="2" height="2" fill="#fff"/><rect x="459" y="62" width="2" height="2" fill="#fff"/><rect x="462" y="62" width="2" height="2" fill="#fff"/><rect x="472.5" y="50.5" width="14" height="9" fill="#d4d0c8" stroke="#000080"/><rect x="472.0" y="50" width="15" height="3.500" fill="#000080"/><rect x="473.5" y="51" width="1.500" height="1.500" fill="#fff"/><rect x="477.0" y="56.5" width="14" height="9" fill="#d4d0c8" stroke="#000080"/><rect x="476.5" y="56" width="15" height="3.500" fill="#000080"/><rect x="478.0" y="57" width="1.500" height="1.500" fill="#fff"/><rect x="481.5" y="62.5" width="14" height="9" fill="#d4d0c8" stroke="#000080"/><rect x="481.0" y="62" width="15" height="3.500" fill="#000080"/><rect x="482.5" y="63" width="1.500" height="1.500" fill="#fff"/><rect x="503.5" y="50.5" width="11" height="9" fill="#d4d0c8" stroke="#000080"/><rect x="503.0" y="50" width="12" height="3.500" fill="#000080"/><rect x="504.5" y="51" width="1.500" height="1.500" fill="#fff"/><rect x="508.0" y="56.5" width="11" height="9" fill="#d4d0c8" stroke="#000080"/><rect x="507.5" y="56" width="12" height="3.500" fill="#000080"/><rect x="509.0" y="57" width="1.500" height="1.500" fill="#fff"/><rect x="512.5" y="62.5" width="11" height="9" fill="#d4d0c8" stroke="#000080"/><rect x="512.0" y="62" width="12" height="3.500" fill="#000080"/><rect x="513.5" y="63" width="1.500" height="1.500" fill="#fff"/><path d="M521.500 56.500V51.500H526.500M521.500 51.500L527 57" stroke="#000" stroke-width="1.200" fill="none"/><path d="M551.500 50L556 62M558.500 50L553.500 62" stroke="#000" stroke-width="1.600" fill="none"/><ellipse cx="551" cy="66" rx="2.600" ry="3.800" stroke="#000080" stroke-width="1.500" fill="none"/><ellipse cx="558.500" cy="66" rx="2.600" ry="3.800" stroke="#000080" stroke-width="1.500" fill="none"/><path d="M575.500 50.500H583L587 54.500V64.500H575.500Z" fill="#fff" stroke="#000"/><path d="M577.500 54h4M577.500 57h6M577.500 60h6" stroke="#000"/><path d="M584.500 55.500H592L596.500 59.500V68.500H584.500Z" fill="#fff" stroke="#000080" stroke-width="1.200"/><path d="M587 60h4M587 63h7M587 66h7" stroke="#000080"/><path d="M606 53H613V50.500H620V53H627.500V61L629 62.500V71H612V69H606Z" fill="#fff" transform="translate(1,1)"/><path d="M606 53H613V50.500H620V53H627.500V61L629 62.500V71H612V69H606Z" fill="#808080"/><path d="M613 52.500h7" stroke="#d4d0c8"/><path d="M636 71V62L639.500 54V51H645V54L647 58H649L651 54V51H656.500V54L660 62V71H651V64H645V71Z" fill="#000"/><rect x="638" y="66" width="2" height="2" fill="#fff"/><rect x="654" y="66" width="2" height="2" fill="#fff"/><rect x="641" y="53" width="2" height="1.500" fill="#d4d0c8"/><rect x="653" y="53" width="2" height="1.500" fill="#d4d0c8"/><path d="M683.500 58V51.500H693L696 54.500V58" fill="#f0f0f0" stroke="#000"/><path d="M676.500 62L681 57.500H697.500V66.500L694 70.500H676.500Z" fill="#e4e4e4" stroke="#000" stroke-width="1.200"/><path d="M680 70.500v1.500h12v-1.500" fill="none" stroke="#000"/><path d="M679 63h14M680 66h13" stroke="#a0a0a0" stroke-dasharray="1 1"/><path d="M710.500 58L714 50.500H728L724 58" fill="#fff" stroke="#000"/><path d="M715 53h9M714 55.500h9" stroke="#000"/><path d="M705.500 61.500L710.500 57.500H728.500V64.500L723.500 71.500H705.500Z" fill="#e8e8e8" stroke="#000" stroke-width="1.200"/><path d="M705.500 66.500H723.500M723.500 61.500V71.500M723.500 61.500L728.500 57.500M705.500 61.500H723.500" stroke="#000" fill="none"/><path d="M714 64h5" stroke="#e0d000" stroke-width="1.500"/><path d="M748 68L749.500 63.500L756 52.500L759.500 54.500L753 65.500Z" fill="#f0f000" stroke="#000" stroke-width="1.200"/><path d="M748 68L749.500 63.500L752 65Z" fill="#000"/><ellipse cx="757.500" cy="52" rx="2.500" ry="2" fill="#ff0000"/><path d="M747 69.500H768" stroke="#0000ff" stroke-width="1.200"/><path d="M786.500 50V60M775.500 60.500H797.500L786.500 71.500Z" fill="none" stroke="#000" stroke-width="1.500"/><rect x="807" y="52" width="21" height="13" rx="2" fill="none" stroke="#000" stroke-width="1.700"/><path d="M808.500 54v9M826.500 54v9" stroke="#808000" stroke-width="1"/><path d="M817.500 65V72" stroke="#000" stroke-width="1.500"/><path d="M814.500 62.500V56.500H820.500V62.500M814.500 59.500H820.500" fill="none" stroke="#000" stroke-width="1.500"/><path d="M848.500 50V52.500L856 57.500L842 63.500L848.500 68.500V72" fill="none" stroke="#000" stroke-width="1.400"/><path d="M879 50V59M879 64V72" stroke="#000" stroke-width="1.500"/><path d="M871 59H887M871 64H887" stroke="#000" stroke-width="1.800"/><path d="M906.500 50.500C913 49.500 915.500 58 908 60.500C916 61 914.500 71.500 906.500 71.500" fill="none" stroke="#000" stroke-width="1.500"/><path d="M942.500 50V72M931 55.500H954L942.500 66.500ZM931 66.500H954" fill="none" stroke="#000" stroke-width="1.400"/><path d="M966.500 54H973C982.500 54 982.500 68 973 68H966.500Z M961 57.500H966M961 64.500H966M980.500 61H985" fill="none" stroke="#000" stroke-width="1.500"/><path d="M999 71.500L993 62L995 60.500L998.500 63.500L996.500 52.500L999 51.500L1001.500 58L1002 50.500H1005L1005.500 58L1008 51.500L1010.500 52L1009.500 59.500L1013 55L1015 56.500L1011 65.500L1009.500 71.500Z" fill="#fff" stroke="#000" stroke-width="1.300"/><path d="M1030 70V65.500L1025.500 60L1027.500 58L1030.500 60V55.500L1033 54.500L1034 57V53.500H1037V57L1038 54.500L1041 55.500V58.500L1043.500 57.500V62.500L1040 66.500V70Z" fill="#fff" stroke="#000" stroke-width="1.300"/><path d="M1058 59.500C1061 51.500 1072 51 1075 58.500C1077 64.500 1072 70 1066 69" fill="none" stroke="#000" stroke-width="1.300"/><path d="M1057.500 55V60.500H1063" fill="none" stroke="#000" stroke-width="1.400"/><g transform="translate(1,1)"><path d="M1106 59.500C1103 51.500 1092 51 1089 58.500C1087 64.500 1092 70 1098 69" fill="none" stroke="#fff" stroke-width="1.500"/></g><path d="M1106 59.500C1103 51.500 1092 51 1089 58.500C1087 64.500 1092 70 1098 69" fill="none" stroke="#808080" stroke-width="1.800"/><path d="M1107 54.500V60.500H1101" fill="none" stroke="#808080" stroke-width="1.800"/><path d="M1123 60H1117V71H1123M1117 65.5H1121.5" fill="none" stroke="#fff" stroke-width="2.200" transform="translate(1,1)"/><path d="M1123 60H1117V71H1123M1117 65.5H1121.5" fill="none" stroke="#808080" stroke-width="2.700"/><path d="M1127 67.500V62H1140.500V67.500M1133.500 62V66.500" fill="none" stroke="#fff" stroke-width="2" transform="translate(1,1)"/><path d="M1127 67.500V62H1140.500V67.500M1133.500 62V66.500" fill="none" stroke="#808080" stroke-width="2.800"/><path d="M1154 60H1148V71H1154M1148 65.5H1152.5" fill="none" stroke="#fff" stroke-width="2.200" transform="translate(1,1)"/><path d="M1154 60H1148V71H1154M1148 65.5H1152.5" fill="none" stroke="#808080" stroke-width="2.700"/><path d="M1170 60H1164V71H1170M1164 65.5H1168.5" fill="none" stroke="#fff" stroke-width="2.200" transform="translate(2335,1) scale(-1,1)"/><path d="M1170 60H1164V71H1170M1164 65.5H1168.5" fill="none" stroke="#808080" stroke-width="2.700" transform="translate(2334,0) scale(-1,1)"/><path d="M1120 56L1124 51.500H1136L1138 54M1138.5 51V55H1134.5" fill="none" stroke="#808080" stroke-width="1"/><path d="M1121 57L1125 52.500H1135" fill="none" stroke="#fff" stroke-width="1"/><path d="M1151 56L1155 51.500H1167L1169 54M1169.5 51V55H1165.5" fill="none" stroke="#808080" stroke-width="1"/><path d="M1152 57L1156 52.500H1166" fill="none" stroke="#fff" stroke-width="1"/></svg>
<div class="t" style="left:1178px;top:49.5px;font-family:'Liberation Serif',serif;font-style:italic;font-weight:bold;font-size:22px;color:#000;letter-spacing:-1.2px">A<span style="font-size:16px">a</span></div>
<div class="t" style="left:1210px;top:52.70px;font-size:15px;color:#000;letter-spacing:-0.1px;-webkit-text-stroke:0.3px #000">.op</div>
<svg width="1600" height="1200"><path d="M1396.5 1102L1396.5 1118.6L1400 1115.4L1402.5 1119.9L1404.9 1118.9L1402.8 1113.9L1407.6 1113.7Z" fill="#fff" stroke="#000" stroke-width="1.1" stroke-linejoin="round"/></svg>
<div class="a" style="left:1540px;top:1156px;width:55px;height:1px;background:#808080;"></div>
<div class="a" style="left:1540px;top:1156px;width:1px;height:15px;background:#808080;"></div>
<div class="a" style="left:1540px;top:1171px;width:56px;height:1px;background:#fff;"></div>
<div class="a" style="left:1595px;top:1156px;width:1px;height:16px;background:#fff;"></div>
<div class="a" style="left:0px;top:1175px;width:1600px;height:25px;background:#e9e9e8;"></div>
<div class="a" style="left:29px;top:1176px;width:2px;height:24px;background:#3a3a3a;"></div>
<div class="a" style="left:1036px;top:1176px;width:207px;height:26px;background:#dededd;border-radius:4px;box-shadow:inset 0 0 0 1px #c4c4c3"></div>
<div class="a" style="left:33px;top:1176px;width:24px;height:24px;background:#f1f1f0;border-radius:3px"></div>
<div class="t" style="left:241.4px;top:1180.66px;font-size:13.4px;color:#3b3b3b;letter-spacing:0.85px">Жоржи Гоуларт - Суха...</div>
<div class="t" style="left:447.7px;top:1180.66px;font-size:13.4px;color:#3b3b3b;letter-spacing:-0.4px">CAD</div>
<div class="t" style="left:653.6px;top:1180.66px;font-size:13.4px;color:#3b3b3b;letter-spacing:0.5px">(1) Германиевые УНЧ | ...</div>
<div class="t" style="left:859.7px;top:1180.66px;font-size:13.4px;color:#3b3b3b;letter-spacing:0.7px">Germanium</div>
<div class="t" style="left:1065px;top:1180.66px;font-size:13.4px;color:#3b3b3b;letter-spacing:0.35px">LTspice XVII - bokarev_0...</div>
<div class="t" style="left:1444.5px;top:1180.66px;font-size:13.4px;color:#3b3b3b;letter-spacing:0.5px">5 °C</div>
<div class="t" style="left:1484px;top:1180.66px;font-size:13.4px;color:#3b3b3b;letter-spacing:0.37px">Ср, 24 мар, 17:14</div>
<svg width="1600" height="1200"><defs><linearGradient id="gf" x1="0" y1="0" x2="0" y2="1"><stop offset="0" stop-color="#7aa7dc"/><stop offset="1" stop-color="#a9c6ea"/></linearGradient><radialGradient id="gg" cx=".4" cy=".35" r=".8"><stop offset="0" stop-color="#e3e9f6"/><stop offset="1" stop-color="#b9c4e0"/></radialGradient><radialGradient id="gk" cx=".5" cy=".3" r=".8"><stop offset="0" stop-color="#9a9a9a"/><stop offset=".6" stop-color="#2a2a2a"/><stop offset="1" stop-color="#111"/></radialGradient></defs><path d="M13 1183.500C19.500 1183 21 1188 17.500 1190C14.500 1191.500 11.500 1192 11.500 1193.500C12 1195.500 15 1193 16 1194.500C17 1197 12 1198.500 9 1197.500C5 1196 4.500 1190 7 1186.500C8.500 1184.500 10.500 1183.700 13 1183.500Z" fill="#3c3e3c"/><ellipse cx="17.500" cy="1179" rx="3.200" ry="1.800" transform="rotate(-25 17.500 1179)" fill="#3c3e3c"/><ellipse cx="11.800" cy="1179.300" rx="1.300" ry="2" transform="rotate(10 11.800 1179.300)" fill="#3c3e3c"/><ellipse cx="8.300" cy="1180.800" rx="1.200" ry="1.800" transform="rotate(-10 8.300 1180.800)" fill="#3c3e3c"/><ellipse cx="5.300" cy="1183.300" rx="1.100" ry="1.600" transform="rotate(-30 5.300 1183.300)" fill="#3c3e3c"/><path d="M35.500 1182V1181C35.500 1180 36.500 1179.500 37.500 1179.500H42.500C43.500 1179.500 44 1180.500 44.500 1181.500H53C54.500 1181.500 55 1182.500 55 1183.500V1194C55 1195.200 54.300 1195.500 53 1195.500H37.500C36 1195.500 35.500 1195 35.500 1194Z" fill="url(#gf)" stroke="#3a6fb8" stroke-width="1"/><rect x="43" y="1186" width="4.500" height="5" rx="1" fill="none" stroke="#3567b5" stroke-width="1.200"/><path d="M40.500 1186v-1.500h2M50 1186v-1.500h-2M40.500 1191v1.500h2M50 1191v1.500h-2" stroke="#3567b5" fill="none" stroke-width="1.200"/><rect x="60.500" y="1179" width="19.500" height="17" rx="2" fill="#3e403e" stroke="#1e1e1e"/><rect x="63" y="1181.500" width="14.500" height="10.500" fill="#1c1c1c" stroke="#777" stroke-width=".7"/><path d="M65 1185l3 2l-3 2M69 1189.500h3" stroke="#fff" fill="none" stroke-width="1"/><rect x="62.500" y="1193.500" width="2.500" height="1.200" fill="#60d020"/><path d="M85.500 1197.500V1181C85.500 1179 87 1178.500 88.500 1178.500H100C101.800 1178.500 103 1179.500 103 1181V1197.500Z" fill="#dcdcd8" stroke="#8a8a86"/><rect x="88" y="1183" width="12.500" height="5.500" fill="#c8c8c4" stroke="#777"/><rect x="88" y="1190.500" width="12.500" height="5.500" fill="#c8c8c4" stroke="#777"/><rect x="92" y="1185" width="4.500" height="1.600" fill="#777"/><rect x="92" y="1192.500" width="4.500" height="1.600" fill="#777"/><rect x="109.500" y="1177.500" width="17.500" height="19.500" rx="1.500" fill="#5a5c58" stroke="#2c2c2a"/><rect x="111.500" y="1179.500" width="13.500" height="4.500" fill="#a4e060" stroke="#4a6a20" stroke-width=".6"/><path d="M111.500 1187h13.500M111.500 1190h13.500M111.500 1193h13.500" stroke="#b8b8b4" stroke-width="1.700" stroke-dasharray="2.200 1.200"/><rect x="133" y="1179" width="18" height="18" fill="#fff" stroke="#006400" stroke-width="2"/><path d="M136 1182.500h4l7.500 11h-4ZM147.500 1182.500h-3.500l-8.500 11h4Z" fill="#007000"/><path d="M143 1188h6.500v2.500h-5" fill="#007000"/><rect x="157" y="1179" width="18" height="18" fill="#fff" stroke="#000090" stroke-width="2"/><path d="M159.500 1183h3.300l.4 6.500l3-6.500h2.800l.2 6.500l2.800-6.500h3l-5 10h-3l-.3-6l-2.800 6h-3Z" fill="#000090"/><circle cx="189.700" cy="1188" r="12" fill="url(#gg)"/><circle cx="224.600" cy="1187.700" r="8" fill="url(#gk)"/><path d="M218.500 1186.500C221 1185.500 223 1186.500 224.600 1189C226.200 1186.500 228.200 1185.500 230.700 1186.500C230 1190 227.500 1192 224.600 1192.500C221.700 1192 219.200 1190 218.500 1186.500Z" fill="#f4f4f4"/><path d="M424.500 1184.500L435 1182L438 1184V1191L428 1194L424.500 1191.500Z" fill="#b01818" stroke="#700c0c" stroke-width=".8"/><path d="M426 1181l7 6M433 1180.500l-5 7" stroke="#d8c070" stroke-width="1.500"/><path d="M424.500 1187.500L428 1189.500L438 1187" stroke="#700c0c" fill="none" stroke-width=".8"/><circle cx="637" cy="1187.700" r="7.700" fill="url(#gg)" stroke="#aab4d0" stroke-width=".6"/><path d="M835.500 1183V1182C835.500 1181 836 1180.500 837 1180.500H841C842 1180.500 842.500 1181.500 843 1182.500H849.500C850.500 1182.500 851 1183 851 1184V1193C851 1194 850.500 1194.500 849.500 1194.500H837C836 1194.500 835.500 1194 835.500 1193Z" fill="url(#gf)" stroke="#3a6fb8" stroke-width="1"/><path d="M1041.500 1180.500V1195.500L1056 1181.500Z" fill="none" stroke="#111" stroke-width="1.200"/><path d="M1045 1182v4.500h3M1048.500 1181.500h6.500M1052.500 1181.500l-1.500 5" stroke="#9a0c0c" stroke-width="1.700" fill="none"/><rect x="1244.500" y="1181" width="23" height="13.500" rx="1" fill="#2e2e2e"/><path d="M1245.500 1182H1266.500L1265.500 1190H1246.500Z" fill="#f2f2f0"/><path d="M1247 1183l8.500 5l9-5" stroke="#d0d0cc" fill="none"/><path d="M1269 1180.500H1291.500V1195.500H1271L1269 1193.500Z" fill="#4c80d0" stroke="#2a5aa8"/><rect x="1272" y="1181" width="16.500" height="7" fill="#f4f4f4"/><rect x="1272" y="1181" width="16.500" height="1.800" fill="#f08a20"/><rect x="1274.500" y="1190" width="11" height="5" fill="#d8d8d8"/><rect x="1277" y="1191" width="3" height="3.500" fill="#444"/><path d="M1300.500 1180C1300.500 1186 1301.500 1188.500 1304 1188.500C1306.500 1188.500 1307.500 1186 1307.500 1180Z" fill="#e8e0e0" stroke="#b0a8a8" stroke-width=".6"/><path d="M1300.700 1184.500H1307.300C1307 1187.500 1306 1188.500 1304 1188.500C1302 1188.500 1301 1187.500 1300.700 1184.500Z" fill="#a01424"/><path d="M1304 1188.500V1195M1301 1195.700H1307" stroke="#a8a0a0" stroke-width="1.300"/><circle cx="1337.800" cy="1187.700" r="10.800" fill="#2ca5e0"/><path d="M1331 1187.500L1344.500 1182L1342 1194L1338 1191L1336 1193L1335.500 1189.500Z" fill="#fff"/><path d="M1335.500 1189.500L1343 1183.500L1337 1190.500Z" fill="#c8daea"/><ellipse cx="1363" cy="1187.700" rx="9" ry="12" fill="#3b6fb8"/><path d="M1358.500 1183.500L1367 1191.500L1363 1195V1180.500L1367 1184L1358.500 1192" fill="none" stroke="#fff" stroke-width="1.500"/><rect x="1376" y="1176" width="24" height="24" fill="#f4f4f4"/><rect x="1376" y="1176.0" width="24" height="1.900" fill="#c22c3c"/><rect x="1376" y="1179.7" width="24" height="1.900" fill="#c22c3c"/><rect x="1376" y="1183.4" width="24" height="1.900" fill="#c22c3c"/><rect x="1376" y="1187.1" width="24" height="1.900" fill="#c22c3c"/><rect x="1376" y="1190.8" width="24" height="1.900" fill="#c22c3c"/><rect x="1376" y="1194.5" width="24" height="1.900" fill="#c22c3c"/><rect x="1376" y="1198.2" width="24" height="1.900" fill="#c22c3c"/><rect x="1376" y="1176" width="12.500" height="12.800" fill="#3c3c6c"/><rect x="1376" y="1176" width="12.500" height="12.800" fill="#8a8ab0" opacity=".35"/><path d="M1403.500 1185H1407L1412.500 1179.500V1196L1407 1191H1403.500Z" fill="#8a8a88" stroke="#5a5a58" stroke-width=".8"/><path d="M1415 1184C1417 1186.500 1417 1189.500 1415 1192M1418 1181.500C1421.500 1185.500 1421.500 1190.500 1418 1194.500" fill="none" stroke="#4a78c0" stroke-width="1.200"/><circle cx="1433.700" cy="1187.700" r="6.300" fill="#f6e254" stroke="#ecd23a" stroke-width="1"/></svg></body></html>
